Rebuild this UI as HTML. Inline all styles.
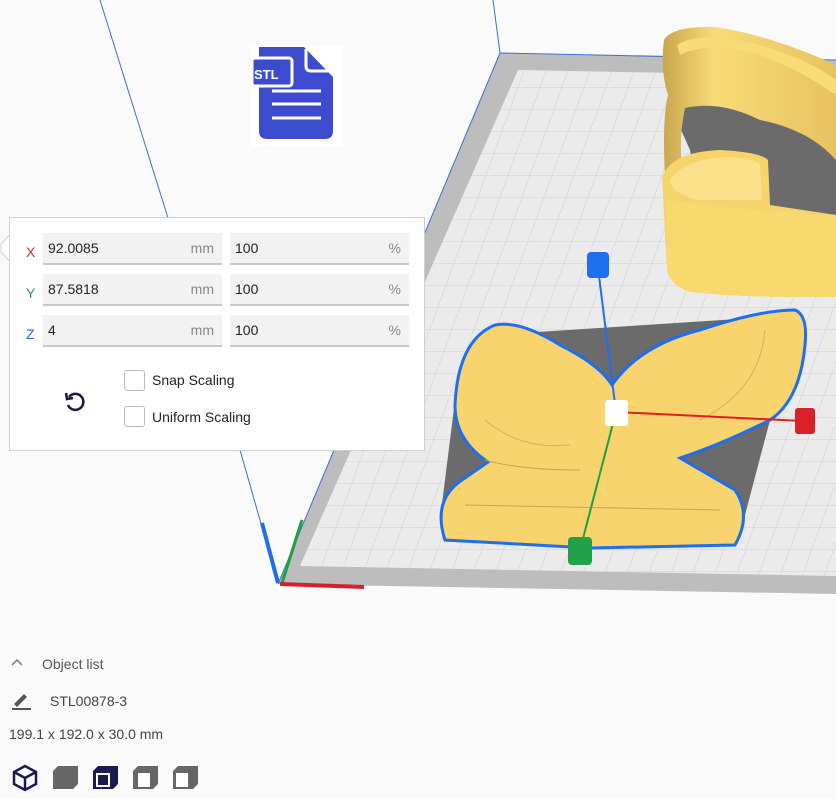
<!DOCTYPE html>
<html><head><style>
body{margin:0;width:836px;height:799px;overflow:hidden;background:#fafafa;font-family:"Liberation Sans",sans-serif;position:relative}
.panel{position:absolute;left:9px;top:217px;width:416px;height:234px;background:#fff;border:1px solid #d0d0d0;box-sizing:border-box}
.lab{position:absolute;left:16px;font-size:14px}
.f{position:absolute;height:32px;background:#f2f2f2;border-bottom:2px solid #c8c8c8;box-sizing:border-box;font-size:14px;color:#222;line-height:30px;padding-left:5px}
.f span{position:absolute;right:8px;color:#888}
.cb{position:absolute;left:114px;width:19px;height:19px;border:1px solid #bbb;border-radius:3px;background:#fff}
.ct{position:absolute;left:142px;font-size:14px;color:#222}
.t{position:absolute;font-size:14px;color:#444}
</style></head><body>
<svg width="836" height="799" style="position:absolute;left:0;top:0">
<line x1="100" y1="0" x2="168" y2="218" stroke="#3a6fd8" stroke-width="1"/>
<line x1="493" y1="0" x2="500" y2="53" stroke="#3a6fd8" stroke-width="1"/>
<line x1="240" y1="450" x2="278" y2="583" stroke="#3a6fd8" stroke-width="1"/>
<polygon points="500,53 836,60 836,594 278,584" fill="#bdbdbd"/>
<polygon points="518,70 836,76 836,576 300,566" fill="#ebebeb"/>
<defs><pattern id="g" width="22" height="22" patternUnits="userSpaceOnUse" patternTransform="skewX(-20)"><path d="M22 0V22M0 22H22" stroke="#cfcfcf" stroke-width="1" fill="none"/></pattern>
<linearGradient id="w" x1="0" x2="1"><stop offset="0" stop-color="#c9a64e"/><stop offset=".3" stop-color="#f7dc78"/><stop offset="1" stop-color="#e8c260"/></linearGradient></defs>
<polygon points="518,70 836,76 836,576 300,566" fill="url(#g)"/>
<line x1="500" y1="53" x2="836" y2="60" stroke="#3a6fd8"/>
<line x1="500" y1="53" x2="278" y2="584" stroke="#3a6fd8"/>
<!-- shadow -->
<polygon points="490,335 800,315 770,420 745,515 440,520 455,400" fill="#6b6b6b"/>
<!-- top right yellow object -->
<path d="M670,105 Q720,100 760,118 Q810,130 836,160 L836,220 L700,205 L690,150 Z" fill="#6b6b6b"/>
<path d="M664,40 Q672,26 715,27 Q770,35 836,65 L836,160 Q810,130 760,120 Q720,100 685,108 Q678,140 683,175 L665,175 Q662,120 668,95 Q660,70 664,40Z" fill="url(#w)"/>
<path d="M677,45 Q700,30 760,45 Q810,60 836,80 L836,95 Q800,70 760,55 Q710,40 680,55Z" fill="#f7dc78"/>
<path d="M662,178 Q670,152 720,150 Q760,152 768,160 L770,205 L836,215 L836,297 Q750,298 690,292 Q670,285 667,270 Z" fill="#f5d46c"/>
<path d="M670,180 Q685,158 730,157 Q755,158 760,165 L762,200 L700,200 Q672,195 670,180Z" fill="#f9e08a"/>
<path d="M667,200 Q720,208 836,215 L836,297 Q750,298 690,292 Q670,285 667,270Z" fill="#f8d96e"/>
<!-- butterfly -->
<path d="M455,405 Q458,340 495,325 Q520,320 560,345 Q600,365 612,385 Q640,345 700,330 Q760,310 795,310 Q808,315 805,345 Q800,400 770,420 Q720,445 680,458 L735,490 Q752,515 735,545 L590,548 L445,540 Q432,500 462,480 L488,462 Q455,440 455,405 Z" fill="#f7d46e" stroke="#1f6ef0" stroke-width="3"/>
<path d="M485,460 Q520,470 580,470 M465,505 L720,510" stroke="#c8a550" fill="none"/>
<path d="M485,420 Q520,450 570,445 M765,330 Q760,390 700,420" stroke="#d8b058" fill="none"/>
<line x1="598" y1="268" x2="616" y2="412" stroke="#1f6ef0" stroke-width="2"/>
<line x1="616" y1="412" x2="803" y2="421" stroke="#e02020" stroke-width="2"/>
<line x1="616" y1="412" x2="580" y2="550" stroke="#20a040" stroke-width="2"/>
<rect x="587" y="252" width="22" height="26" rx="4" fill="#1e6ff0"/>
<rect x="605" y="400" width="23" height="26" rx="3" fill="#fff"/>
<rect x="795" y="408" width="20" height="26" rx="3" fill="#d8202a"/>
<rect x="568" y="537" width="24" height="28" rx="4" fill="#22a04a"/>
<line x1="262" y1="523" x2="278" y2="583" stroke="#1f6ef0" stroke-width="4"/>
<line x1="282" y1="583" x2="302" y2="520" stroke="#20a040" stroke-width="3"/>
<line x1="280" y1="584" x2="364" y2="587" stroke="#d8202a" stroke-width="4"/>
<!-- stl icon -->
<rect x="251" y="46" width="92" height="100" fill="#fff"/>
<path d="M259,47 L304,47 L333,77 L333,131 Q333,139 325,139 L267,139 Q259,139 259,131 Z" fill="#3d4ccf"/>
<path d="M306,49 L306,66 Q306,71 311,71 L330,71" stroke="#fff" stroke-width="3" fill="none"/>
<rect x="252" y="58" width="40" height="28" rx="3" fill="#3d4ccf" stroke="#fff" stroke-width="3"/>
<text x="254" y="79" fill="#fff" font-size="13" font-weight="bold" font-family="Liberation Sans">STL</text>
<path d="M272,91H321M272,104H321M272,118H321" stroke="#fff" stroke-width="3"/>
</svg>
<svg style="position:absolute;left:0;top:234px" width="11" height="30"><path d="M10.5,0 L1,10 L1,18 L10.5,28" fill="#fff" stroke="#d0d0d0"/><rect x="10" y="0" width="2" height="30" fill="#fff"/></svg>
<div class="panel">
<div class="lab" style="top:26px;color:#d82a2a">X</div>
<div class="lab" style="top:67px;color:#2aa050">Y</div>
<div class="lab" style="top:108px;color:#2a6ae0">Z</div>
<div class="f" style="left:33px;top:15px;width:179px">92.0085<span>mm</span></div>
<div class="f" style="left:220px;top:15px;width:179px">100<span>%</span></div>
<div class="f" style="left:33px;top:56px;width:179px">87.5818<span>mm</span></div>
<div class="f" style="left:220px;top:56px;width:179px">100<span>%</span></div>
<div class="f" style="left:33px;top:97px;width:179px">4<span>mm</span></div>
<div class="f" style="left:220px;top:97px;width:179px">100<span>%</span></div>
<svg style="position:absolute;left:52px;top:170px" width="26" height="26" viewBox="0 0 26 26"><path d="M7,9 A8,8 0 1 1 6,17" stroke="#1a1a40" stroke-width="2.5" fill="none"/><path d="M4,5 L5,11 L11,10" stroke="#1a1a40" stroke-width="2.5" fill="none"/></svg>
<div class="cb" style="top:152px"></div><div class="ct" style="top:154px">Snap Scaling</div>
<div class="cb" style="top:188px"></div><div class="ct" style="top:191px">Uniform Scaling</div>
</div>
<svg style="position:absolute;left:10px;top:657px" width="14" height="10"><path d="M2,8 L7,3 L12,8" stroke="#888" stroke-width="1.6" fill="none"/></svg>
<div class="t" style="left:42px;top:656px;color:#555">Object list</div>
<svg style="position:absolute;left:11px;top:691px" width="22" height="20"><path d="M3,13 L13,3 L16,6 L6,16 Z" fill="#555"/><line x1="1" y1="18" x2="20" y2="18" stroke="#555" stroke-width="2"/></svg>
<div class="t" style="left:50px;top:693px">STL00878-3</div>
<div class="t" style="left:9px;top:726px">199.1 x 192.0 x 30.0 mm</div>
<svg style="position:absolute;left:12px;top:764px" width="190" height="28">
<path d="M13,2 L24,8 L24,20 L13,26 L2,20 L2,8 Z M2,8 L13,14 L24,8 M13,14 V26" stroke="#1a1a50" stroke-width="2.5" fill="none"/>
<path d="M41,7 L46,2 L66,2 L66,20 L61,25 L41,25 Z" fill="#666"/>
<path d="M81,7 L86,2 L106,2 L106,20 L101,25 L81,25 Z" fill="#1a1a50"/><rect x="84" y="9" width="14" height="14" fill="#fff"/><rect x="86" y="11" width="10" height="10" fill="#1a1a50"/>
<path d="M121,7 L126,2 L146,2 L146,20 L141,25 L121,25 Z" fill="#666"/><rect x="126" y="9" width="12" height="14" fill="#fff"/>
<path d="M161,7 L166,2 L186,2 L186,20 L181,25 L161,25 Z" fill="#666"/><rect x="164" y="9" width="12" height="14" fill="#fff"/>
</svg>
</body></html>
